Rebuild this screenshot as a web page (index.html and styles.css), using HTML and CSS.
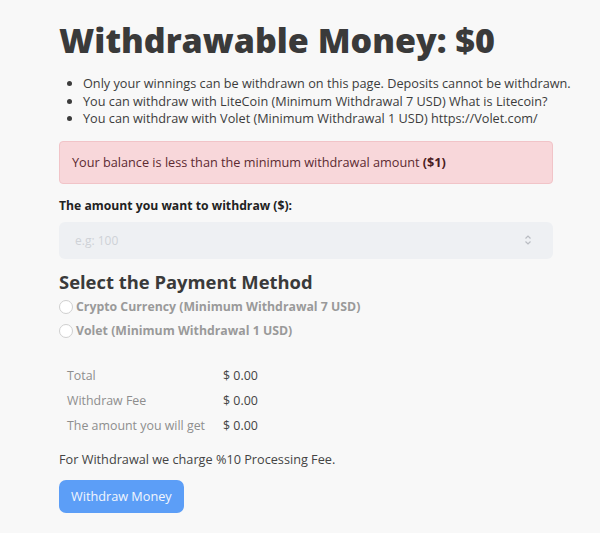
FILE: index.html
```html
<!DOCTYPE html>
<html lang="en">
<head>
    <meta charset="UTF-8">
    <meta name="viewport" content="width=device-width, initial-scale=1.0">
    <title>Withdraw</title>
    <link rel="stylesheet" href="styles.css">
</head>
<body>
    <div class="withdraw-page">
        <h1 class="page-title">Withdrawable Money: $0</h1>

        <ul class="info-list">
            <li>Only your winnings can be withdrawn on this page. Deposits cannot be withdrawn.</li>
            <li>You can withdraw with LiteCoin (Minimum Withdrawal 7 USD) What is Litecoin?</li>
            <li>You can withdraw with Volet (Minimum Withdrawal 1 USD) https://Volet.com/</li>
        </ul>

        <div class="alert-danger">
            Your balance is less than the minimum withdrawal amount <b>($1)</b>
        </div>

        <form id="formWithdraw">
            <label for="amount" class="amount-label">The amount you want to withdraw ($):</label>
            <div class="amount-field">
                <input type="number" id="amount" name="amount" placeholder="e.g: 100" disabled>
                <svg class="spin" width="8" height="12" viewBox="0 0 8 12">
                    <path d="M1.5 4.5 L4 2 L6.5 4.5 M1.5 7.5 L4 10 L6.5 7.5" fill="none" stroke="#b9bcc2" stroke-width="1.2"/>
                </svg>
            </div>

            <h2 class="method-title">Select the Payment Method</h2>
            <label class="method">
                <input type="radio" name="method" value="crypto" disabled>
                Crypto Currency (Minimum Withdrawal 7 USD)
            </label>
            <label class="method">
                <input type="radio" name="method" value="volet" disabled>
                Volet (Minimum Withdrawal 1 USD)
            </label>

            <table class="summary">
                <tbody>
                    <tr>
                        <th scope="row">Total</th>
                        <td>$ 0.00</td>
                    </tr>
                    <tr>
                        <th scope="row">Withdraw Fee</th>
                        <td>$ 0.00</td>
                    </tr>
                    <tr>
                        <th scope="row">The amount you will get</th>
                        <td>$ 0.00</td>
                    </tr>
                </tbody>
            </table>

            <p class="fee-note">For Withdrawal we charge %10 Processing Fee.</p>

            <button type="submit" class="btn-withdraw" disabled>Withdraw Money</button>
        </form>
    </div>
</body>
</html>
```

FILE: styles.css
```css
* {
    margin: 0;
    padding: 0;
    box-sizing: border-box;
}

body {
    font-family: 'Open Sans', 'Noto Sans', sans-serif;
    background-color: #f8f8f8;
    color: #444;
    font-size: 12.7px;
}

.withdraw-page {
    width: 494px;
    margin-left: 59px;
    padding-top: 14px;
}

.page-title {
    font-size: 34px;
    font-weight: 800;
    color: #3a3a3a;
    line-height: 52px;
}

.info-list {
    margin-top: 9px;
    padding-left: 24px;
    line-height: 17.5px;
    color: #3c3c3c;
    white-space: nowrap;
}

.alert-danger {
    margin-top: 13px;
    background-color: #f8d7da;
    border: 1px solid #f1c4c8;
    border-radius: 4px;
    color: #5c2a31;
    padding: 0 12px;
    height: 43px;
    line-height: 41px;
}

.alert-danger b {
    font-weight: 700;
    color: #4a1c22;
}

.amount-label {
    display: block;
    margin-top: 13px;
    font-size: 12.2px;
    font-weight: 700;
    color: #222;
    line-height: 18px;
}

.amount-field {
    margin-top: 7px;
    display: flex;
    align-items: center;
    height: 37px;
    background-color: #eef0f3;
    border-radius: 6px;
    padding: 0 21px 0 16px;
}

.amount-field input {
    flex: 1;
    border: none;
    background: transparent;
    font-family: inherit;
    font-size: 12px;
    color: #444;
    outline: none;
    -moz-appearance: textfield;
}

.amount-field input::placeholder {
    color: #cfd2d7;
}

.amount-field input::-webkit-inner-spin-button {
    -webkit-appearance: none;
}

.method-title {
    margin-top: 10px;
    font-size: 18.4px;
    font-weight: 700;
    color: #3a3a3a;
    line-height: 26px;
}

.method {
    display: flex;
    align-items: center;
    gap: 3px;
    font-size: 12.3px;
    font-weight: 700;
    color: #9a9a9a;
    line-height: 24px;
}

.method:first-of-type {
    margin-top: 1px;
}

.method input {
    appearance: none;
    -webkit-appearance: none;
    width: 14px;
    height: 14px;
    border: 1px solid #cfcfcf;
    border-radius: 50%;
    background-color: #fff;
}

.summary {
    margin-top: 20px;
    border-collapse: collapse;
    font-size: 12.4px;
}

.summary th,
.summary td {
    height: 25px;
    padding: 0 8px;
    text-align: left;
    vertical-align: middle;
    white-space: nowrap;
}

.summary th {
    width: 156px;
    padding-right: 4px;
    font-weight: 400;
    color: #8e8e8e;
}

.summary td {
    color: #444;
}

.fee-note {
    margin-top: 12px;
    color: #444;
    line-height: 18px;
}

.btn-withdraw {
    margin-top: 12px;
    padding: 0 12px;
    height: 33px;
    background-color: #5c9ef7;
    color: #f2f6fd;
    border: none;
    border-radius: 7px;
    font-family: inherit;
    font-size: 12.7px;
}
```
